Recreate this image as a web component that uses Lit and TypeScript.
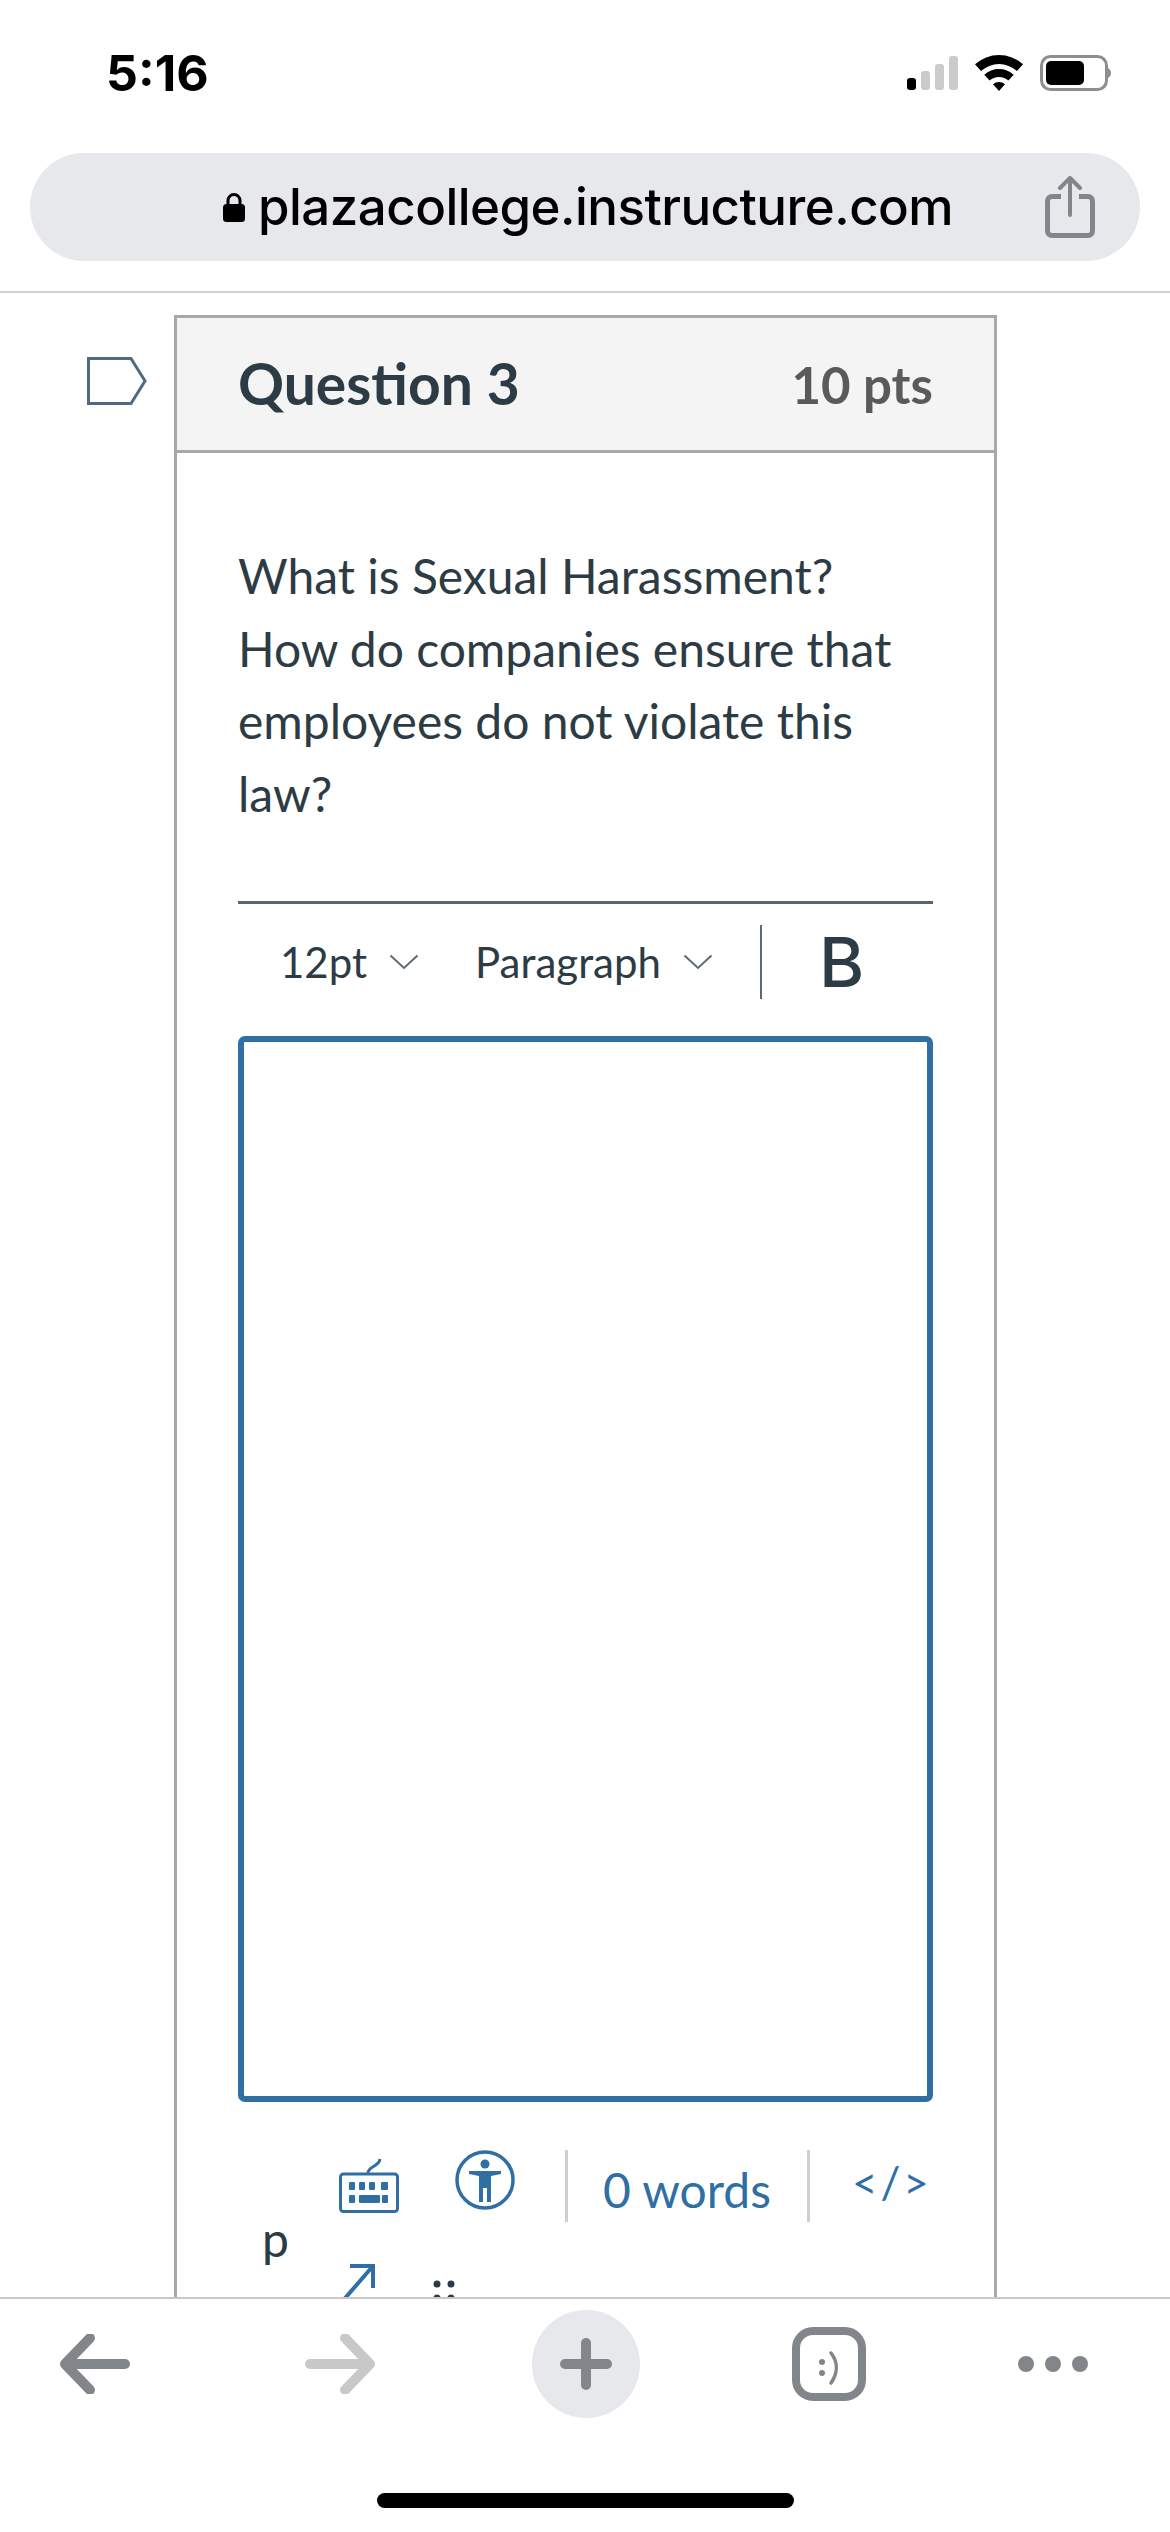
import { LitElement, html, css } from "lit";
import { customElement } from "lit/decorators.js";

@customElement("app-root")
export class AppRoot extends LitElement {
  static styles = css`
    :host { display: flex; flex-direction: column; width: 1170px; height: 2532px; overflow: hidden; background: #fff; font-family: Lato, sans-serif; color: #2d3b45; }
    svg { display: block; flex: none; }
    .status { height: 153px; box-sizing: border-box; padding: 53px 59px 0 106px; display: flex; justify-content: space-between; align-items: flex-start; flex: none; }
    .time { font: 700 50px/40px Inter, "Liberation Sans", sans-serif; color: #000; }
    .sys { display: flex; align-items: center; gap: 17px; margin-top: 2px; }
    .urlbar { margin: 0 30px; height: 108px; border-radius: 54px; background: #e7e8ec; display: flex; align-items: center; flex: none; padding: 0 45px 0 193px; justify-content: space-between; }
    .urlwrap { display: flex; align-items: center; gap: 13px; padding-bottom: 1px; }
    .url { font: 500 51px/60px Inter, "Liberation Sans", sans-serif; color: #000; letter-spacing: -0.52px; }
    .rule { height: 2px; background: #d2d2d4; margin-top: 30px; flex: none; }
    .main { flex: 1; min-height: 0; overflow: hidden; display: flex; padding: 22px 0 0 87px; gap: 27px; }
    .flag { margin-top: 42px; }
    .card { width: 823px; box-sizing: border-box; border: 3px solid #a8a8a8; height: 2600px; flex: none; }
    .head { height: 132px; background: #f4f4f5; border-bottom: 3px solid #a8a8a8; display: flex; justify-content: space-between; align-items: center; padding: 0 61px; }
    .qt { font-weight: 700; font-size: 57px; padding-bottom: 3px; }
    .pts { font-weight: 700; font-size: 51px; color: #585a5c; }
    .body { padding: 0 61px; }
    .prompt { margin: 87px 0 0; font-size: 48px; line-height: 72.5px; width: 694px; height: 361px; }
    .tb { border-top: 3px solid #556572; height: 135px; display: flex; align-items: center; box-sizing: border-box; padding-left: 42px; padding-bottom: 16px; }
    .tb span { font-size: 42px; }
    .sel { display: flex; align-items: center; gap: 22px; }
    .sel + .sel { margin-left: 56px; }
    .vsep { width: 2px; height: 74px; background: #5d6a75; margin: 0 57px 0 47px; }
    .b { font: 500 69px/70px Inter, "Liberation Sans", sans-serif; color: #2d3b45; }
    .editor { height: 1066px; box-sizing: border-box; border: 6px solid #2f6fa3; border-radius: 7px; }
    .foot { display: flex; align-items: flex-start; height: 122px; box-sizing: border-box; padding-top: 48px; color: #2f6fa3; }
    .kbd { margin: 8px 0 0 101px; }
    .acc { margin: 0 0 0 56px; }
    .fsep { width: 3px; height: 72px; background: #cfcfcf; flex: none; }
    .fsep.first { margin-left: 50px; }
    .words { font-size: 48px; line-height: 60px; margin: 10px 36px 0 35px; white-space: nowrap; flex: none; }
    .code { font-size: 44px; line-height: 44px; margin: 10px 0 0 42px; letter-spacing: 3px; white-space: nowrap; }
    .path { display: flex; align-items: flex-start; }
    .p { font-size: 48px; line-height: 50px; margin: -10px 0 0 24px; }
    .resize { margin: 40px 0 0 51px; }
    .grip { margin: 56px 0 0 57px; }
    .nav { height: 235px; box-sizing: border-box; border-top: 2px solid #c8c8ca; background: #fff; flex: none; display: flex; flex-direction: column; align-items: center; }
    .navrow { width: 100%; height: 130px; display: grid; grid-template-columns: 245px 227.5px 260.5px 226px 1fr; align-items: center; box-sizing: border-box; padding-left: 59px; margin-bottom: 64px; flex: none; }
    .plus { width: 108px; height: 108px; border-radius: 50%; background: #e7e8ec; display: flex; align-items: center; justify-content: center; }
    .home { width: 417px; height: 15px; border-radius: 8px; background: #000; flex: none; }
  `;

  render() {
    const gray = "#82868b";
    const light = "#c8c8c8";
    return html`
      <div class="status">
        <div class="time">5:16</div>
        <div class="sys">
          <svg width="51" height="34" viewBox="0 0 51 34">
            <rect x="0" y="22" width="9" height="12" rx="3" fill="#000"/>
            <rect x="14" y="15" width="9" height="19" rx="3" fill="#cbcbcb"/>
            <rect x="28" y="8" width="9" height="26" rx="3" fill="#cbcbcb"/>
            <rect x="42" y="0" width="9" height="34" rx="3" fill="#cbcbcb"/>
          </svg>
          <svg width="48" height="36" viewBox="0 0 48 36">
            <path d="M0 9.2 A36 36 0 0 1 48 9.2 L42 16 A27 27 0 0 0 6 16 Z" fill="#000"/>
            <path d="M9.300 19.700 A22 22 0 0 1 38.700 19.700 L33.400 25.600 A14 14 0 0 0 14.600 25.600 Z" fill="#000"/>
            <path d="M18 29.300 A9 9 0 0 1 30 29.300 L24 36 Z" fill="#000"/>
          </svg>
          <svg width="71" height="36" viewBox="0 0 71 36">
            <rect x="1.500" y="1.500" width="65" height="33" rx="9" fill="none" stroke="#8e8e8e" stroke-width="3"/>
            <rect x="6" y="6" width="38" height="24" rx="5" fill="#000"/>
            <path d="M68 13 C70 14 71 16 71 18 C71 20 70 22 68 23 Z" fill="#8e8e8e"/>
          </svg>
        </div>
      </div>

      <div class="urlbar">
        <div class="urlwrap">
          <svg width="22" height="30" viewBox="0 0 22 30">
            <path d="M5 13 V8.500 a6 6 0 0 1 12 0 V13" fill="none" stroke="#000" stroke-width="3"/>
            <rect x="0" y="12" width="22" height="18" rx="3.500" fill="#000"/>
          </svg>
          <div class="url">plazacollege.instructure.com</div>
        </div>
        <svg width="50" height="62" viewBox="0 0 50 62">
          <path d="M16 20.500 H7 a4.500 4.500 0 0 0 -4.500 4.500 V55 a4.500 4.500 0 0 0 4.500 4.500 H43 a4.500 4.500 0 0 0 4.500 -4.500 V25 a4.500 4.500 0 0 0 -4.500 -4.500 H34" fill="none" stroke="${gray}" stroke-width="5"/>
          <path d="M25 39 V3 M15 12 L25 2 L35 12" fill="none" stroke="${gray}" stroke-width="4" stroke-linecap="round" stroke-linejoin="round"/>
        </svg>
      </div>
      <div class="rule"></div>

      <div class="main">
        <svg class="flag" width="60" height="48" viewBox="0 0 60 48">
          <path d="M1.500 1.500 H44 L58 24 L44 46.500 H1.500 Z" fill="#fff" stroke="#4f6a82" stroke-width="3"/>
        </svg>
        <div class="card">
          <div class="head">
            <div class="qt">Question 3</div>
            <div class="pts">10 pts</div>
          </div>
          <div class="body">
            <p class="prompt">What is Sexual Harassment? How do companies ensure that employees do not violate this law?</p>
            <div class="tb">
              <div class="sel"><span>12pt</span>
                <svg width="30" height="16" viewBox="0 0 30 16"><path d="M1.500 1.500 L15 14 L28.500 1.500" fill="none" stroke="#5d6a75" stroke-width="2"/></svg>
              </div>
              <div class="sel"><span>Paragraph</span>
                <svg width="30" height="16" viewBox="0 0 30 16"><path d="M1.500 1.500 L15 14 L28.500 1.500" fill="none" stroke="#5d6a75" stroke-width="2"/></svg>
              </div>
              <div class="vsep"></div>
              <div class="b">B</div>
            </div>
            <div class="editor"></div>
            <div class="foot">
              <svg class="kbd" width="60" height="55" viewBox="0 0 60 55">
                <rect x="1.500" y="16" width="57" height="37.500" rx="3" fill="none" stroke="#2f6fa3" stroke-width="3"/>
                <path d="M29 15 C29 8 40 9 41 1" fill="none" stroke="#2f6fa3" stroke-width="3"/>
                <g fill="#2f6fa3">
                  <rect x="10" y="24" width="6" height="8" rx="1"/><rect x="20" y="24" width="6" height="8" rx="1"/><rect x="30" y="24" width="6" height="8" rx="1"/><rect x="42" y="24" width="7" height="8" rx="1"/>
                  <rect x="10" y="37" width="6" height="8" rx="1"/><rect x="20" y="37" width="21" height="8" rx="1"/><rect x="43" y="37" width="6" height="8" rx="1"/>
                </g>
              </svg>
              <svg class="acc" width="60" height="60" viewBox="0 0 60 60">
                <circle cx="30" cy="30" r="28" fill="none" stroke="#2f6fa3" stroke-width="3.500"/>
                <circle cx="30" cy="14" r="4.500" fill="#2f6fa3"/>
                <path d="M14 21 H46 V24 L36 26 V52 H32 V38 H28 V52 H24 V26 L14 24 Z" fill="#2f6fa3"/>
              </svg>
              <div class="fsep first"></div>
              <div class="words">0 words</div>
              <div class="fsep"></div>
              <div class="code">&lt;/&gt;</div>
            </div>
            <div class="path">
              <div class="p">p</div>
              <svg class="resize" width="36" height="40" viewBox="0 0 36 40"><path d="M10 2 H33 V24 M33 2 L0 40" fill="none" stroke="#2f6fa3" stroke-width="4"/></svg>
              <svg class="grip" width="22" height="24" viewBox="0 0 22 24"><g fill="#2d3b45"><circle cx="4" cy="4" r="3.500"/><circle cx="18" cy="4" r="3.500"/><circle cx="4" cy="18" r="3.500"/><circle cx="18" cy="18" r="3.500"/></g></svg>
            </div>
          </div>
        </div>
      </div>

      <div class="nav">
        <div class="navrow">
          <svg width="72" height="60" viewBox="0 0 72 60"><path d="M31 4 L6 30 L31 56 M6 30 H66" fill="none" stroke="${gray}" stroke-width="10" stroke-linecap="round" stroke-linejoin="round"/></svg>
          <svg width="72" height="60" viewBox="0 0 72 60"><path d="M41 4 L66 30 L41 56 M66 30 H6" fill="none" stroke="${light}" stroke-width="10" stroke-linecap="round" stroke-linejoin="round"/></svg>
          <div class="plus"><svg width="52" height="52" viewBox="0 0 52 52"><path d="M26 5 V47 M5 26 H47" stroke="${gray}" stroke-width="10" stroke-linecap="round"/></svg></div>
          <svg width="74" height="74" viewBox="0 0 74 74">
            <rect x="4" y="4" width="66" height="66" rx="17" fill="none" stroke="${gray}" stroke-width="8"/>
            <circle cx="30" cy="35" r="3" fill="${gray}"/><circle cx="30" cy="46" r="3" fill="${gray}"/>
            <path d="M39 26 C46 35 46 46 39 56" fill="none" stroke="${gray}" stroke-width="3.500" stroke-linecap="round"/>
          </svg>
          <svg width="70" height="16" viewBox="0 0 70 16"><g fill="${gray}"><circle cx="8" cy="8" r="8"/><circle cx="35" cy="8" r="8"/><circle cx="62" cy="8" r="8"/></g></svg>
        </div>
        <div class="home"></div>
      </div>
    `;
  }
}
